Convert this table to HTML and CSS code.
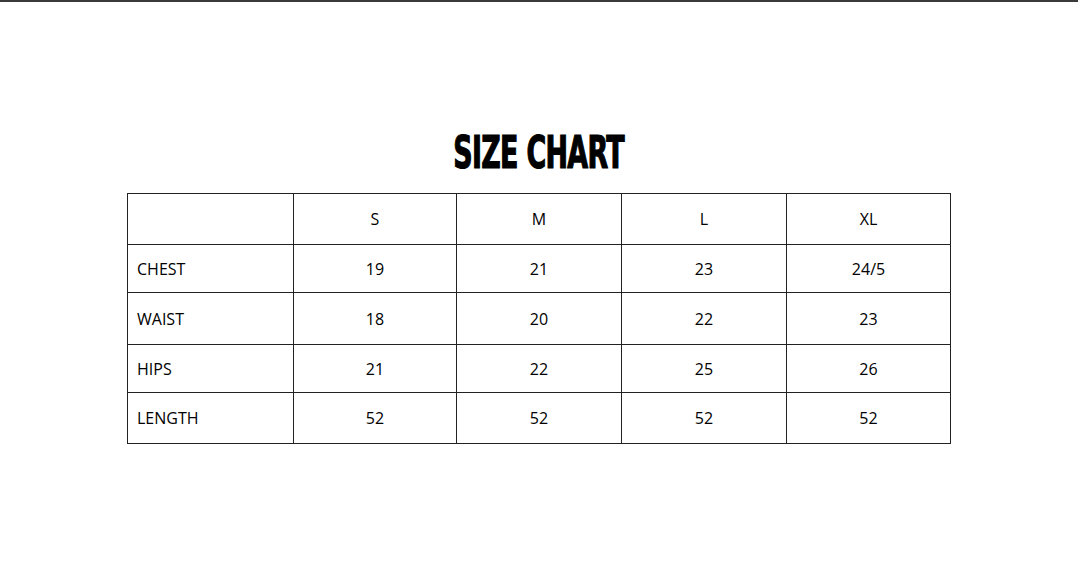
FILE: index.html
```html
<!DOCTYPE html>
<html>
<head>
<meta charset="utf-8">
<link rel="stylesheet" href="styles.css">
</head>
<body>
<div class="page">
  <h1 class="title">SIZE CHART</h1>
  <table class="chart">
    <colgroup>
      <col class="c0"><col class="c1"><col class="c2"><col class="c3"><col class="c4">
    </colgroup>
    <tr class="r0"><td></td><td>S</td><td>M</td><td>L</td><td>XL</td></tr>
    <tr class="r1"><td class="lbl">CHEST</td><td>19</td><td>21</td><td>23</td><td>24/5</td></tr>
    <tr class="r2"><td class="lbl">WAIST</td><td>18</td><td>20</td><td>22</td><td>23</td></tr>
    <tr class="r3"><td class="lbl">HIPS</td><td>21</td><td>22</td><td>25</td><td>26</td></tr>
    <tr class="r4"><td class="lbl">LENGTH</td><td>52</td><td>52</td><td>52</td><td>52</td></tr>
  </table>
</div>
</body>
</html>
```
FILE: styles.css
```css
html, body {
  margin: 0;
  padding: 0;
  background: #fff;
}
.page {
  border-top: 2px solid #3a3a3a;
  height: 566px;
  display: flex;
  flex-direction: column;
  align-items: flex-start;
}
.title {
  align-self: center;
  margin: 123px 0 0 0;
  font-family: "DejaVu Sans Condensed", "DejaVu Sans", sans-serif;
  font-weight: bold;
  font-size: 44px;
  line-height: 55px;
  color: #000;
  letter-spacing: -1px;
  -webkit-text-stroke: 1.2px #000;
  transform: scaleX(0.68);
  height: 55px;
}
.chart {
  margin: 13px 0 0 127px;
  border-collapse: collapse;
  table-layout: fixed;
  width: 823px;
  font-family: "Open Sans", sans-serif;
  font-size: 16px;
  color: #000;
}
.c0 { width: 166px; }
.c1 { width: 163px; }
.c2 { width: 165px; }
.c3 { width: 165px; }
.c4 { width: 164px; }
.chart td {
  border: 1px solid #222;
  text-align: center;
  padding: 0;
  vertical-align: middle;
}
.chart td.lbl {
  text-align: left;
  padding-left: 9px;
}
.r0 { height: 51px; }
.r1 { height: 48px; }
.r2 { height: 52px; }
.r3 { height: 48px; }
.r4 { height: 51px; }
```
